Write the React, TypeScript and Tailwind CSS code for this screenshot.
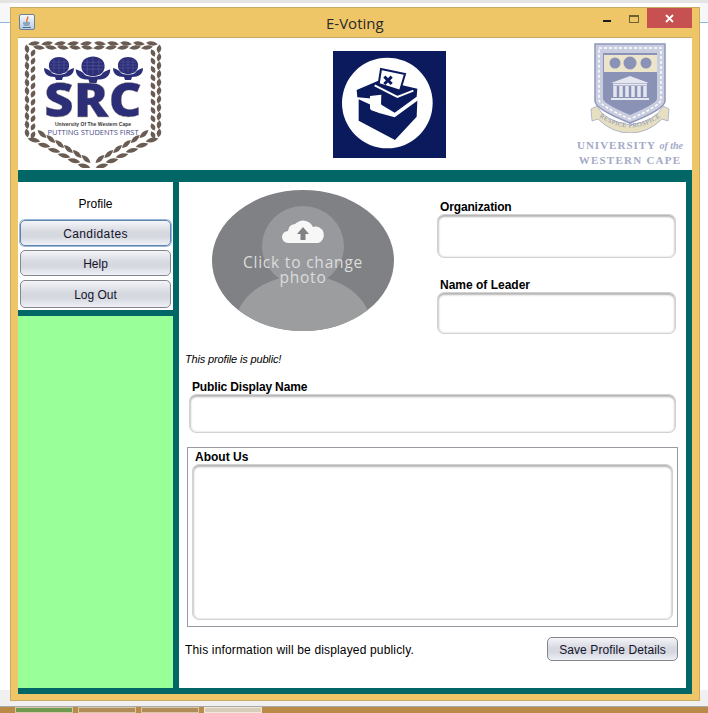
import React from 'react';

// leaves of the SRC wreath: x, y, rotation, length
const half: [number, number, number, number][] = [];
for (let i = 0; i < 5; i++) {
  half.push([10 + i * 13, 3.5, 82, 12]);
  half.push([15 + i * 12, 7.5, 98, 12]);
}
for (let i = 0; i < 11; i++) {
  half.push([3, 9 + i * 8.4, -8, 9]);
  half.push([9, 13 + i * 8.2, 24, 8]);
}
for (let i = 0; i < 6; i++) {
  const t = i / 5;
  half.push([10 + t * 50, 100 + t * 26, 104, 13]);
  half.push([18 + t * 44, 94 + t * 25, 132, 12]);
}
const wreathLeaves = [...half, ...half.map(([x, y, a, l]) => [138 - x, y, -a, l] as [number, number, number, number])];

function Flower({ x, y, s = 1 }: { x: number; y: number; s?: number }) {
  return (
    <g transform={`translate(${x} ${y}) scale(${s})`}>
      <path d="M-10 0 C-11 -7 -5 -10 0 -10 C5 -10 11 -7 10 0 C9 5 5 7 0 7 C-5 7 -9 5 -10 0Z" fill="#2c2f78" />
      <path d="M-8 -5 H8 M-9.500 -2 H9.500 M-9 1 H9 M-5 -8 V5 M0 -9 V6 M5 -8 V5" stroke="#5a5da0" strokeWidth="0.500" />
      <path d="M-15 1 C-15 7 -11 10 -4 10 L-3 13 L3 13 L4 10 C11 10 15 7 15 1 C12 2 9 3 7 6 C4 8 -4 8 -7 6 C-9 3 -12 2 -15 1Z" fill="#2c2f78" />
    </g>
  );
}

function SrcLogo() {
  return (
    <svg width="138" height="128" viewBox="0 0 138 128" className="shrink-0">
      {wreathLeaves.map(([x, y, a, l], i) => (
        <path key={i} d={`M0 ${-l / 2} Q4.500 0 0 ${l / 2} Q-4.500 0 0 ${-l / 2}Z`} fill="#6a5c52" transform={`translate(${x} ${y}) rotate(${a})`} />
      ))}
      <Flower x={35} y={27} />
      <Flower x={69} y={28} s={1.15} />
      <Flower x={104} y={27} />
      <text x="69" y="77" textAnchor="middle" fontFamily="'Open Sans', sans-serif" fontWeight="800" fontSize="47" textLength="98" lengthAdjust="spacingAndGlyphs" fill="#2c2f78" stroke="#b8a98a" strokeWidth="0.300">SRC</text>
      <text x="69" y="86" textAnchor="middle" fontFamily="'Liberation Sans', sans-serif" fontWeight="700" fontSize="5" fill="#3a3636">University Of The Western Cape</text>
      <text x="69" y="95" textAnchor="middle" fontFamily="'Open Sans', sans-serif" fontSize="7.200" textLength="91" lengthAdjust="spacingAndGlyphs" fill="#4a4d8c">PUTTING STUDENTS FIRST</text>
    </svg>
  );
}

function BallotLogo() {
  return (
    <svg width="113" height="107" viewBox="99 153 339 321" className="shrink-0">
      <rect x="99" y="153" width="339" height="321" fill="#0a1a5c" />
      <circle cx="262" cy="309" r="136" fill="#fff" />
      <path d="M170 270 L240 240 L352 266 L350 290 L284 338 L244 314 L240 298 L172 292Z" fill="#0a1a5c" />
      <path d="M243 207 L315 222 L300 272 L236 252Z" fill="#fff" stroke="#0a1a5c" strokeWidth="6" />
      <path d="M253 230 L275 252 M275 230 L253 252" stroke="#0a1a5c" strokeWidth="9" />
      <path d="M224 256 L292 291 L340 272" stroke="#fff" strokeWidth="6" fill="none" />
      <path d="M176 298 L212 314 L212 330 L240 340 L284 352 L352 302 L350 350 L285 420 L176 362Z" fill="#0a1a5c" />
      <path d="M210 288 L244 284 L242 340 L210 326Z" fill="#fff" />
    </svg>
  );
}

function UwcLogo() {
  return (
    <div className="ml-[132px] mt-[5px] flex w-[104px] shrink-0 flex-col items-center">
      <svg width="80" height="90" viewBox="0 0 80 90">
        <path d="M5 1 H75 V58 Q75 66 40 80 Q5 66 5 58Z" fill="#c9cde0" stroke="#8f97ba" strokeWidth="1.500" />
        <path d="M9 5 H71 V57 Q70 63 40 76 Q10 63 9 57Z" fill="none" stroke="#fff" strokeWidth="1.500" strokeDasharray="3 2" />
        <path d="M13 10 H67 V56 Q66 61 40 72 Q14 61 13 56Z" fill="#8a92b5" />
        <rect x="14" y="12" width="53" height="17" fill="#ece5cc" />
        <circle cx="25" cy="20" r="5.500" fill="#8a92b5" />
        <circle cx="40" cy="20" r="6.500" fill="#8a92b5" />
        <circle cx="56" cy="20" r="5.500" fill="#8a92b5" />
        <path d="M21 40 L40 33 L59 40Z" fill="#e4e6f0" />
        <path d="M23 41.500 H57" stroke="#e4e6f0" strokeWidth="2" />
        <path d="M25 43 V54 M31 43 V54 M37 43 V54 M43 43 V54 M49 43 V54 M55 43 V54" stroke="#e4e6f0" strokeWidth="3.500" />
        <path d="M21 56 H59" stroke="#e4e6f0" strokeWidth="2" />
        <path d="M1 66 L7 63 Q14 78 40 82 Q66 78 73 63 L79 66 L78 78 L72 76 Q58 90 40 90 Q22 90 8 76 L2 78Z" fill="#e6dfc0" stroke="#a3a9c6" strokeWidth="0.800" />
        <path id="motto-curve" d="M8 73 Q40 96 72 73" fill="none" />
        <text fontFamily="'Liberation Serif', serif" fontSize="6.500" letterSpacing="0.500" fill="#8a92b5">
          <textPath href="#motto-curve" startOffset="50%" textAnchor="middle">RESPICE PROSPICE</textPath>
        </text>
      </svg>
      <div className="mt-[5px] whitespace-nowrap font-['Liberation_Serif',serif] text-[11px] font-bold leading-[14px] tracking-[1px] text-[#a3a9c6]">
        UNIVERSITY <span className="text-[10px] italic tracking-normal">of the</span>
      </div>
      <div className="whitespace-nowrap font-['Liberation_Serif',serif] text-[11px] font-bold leading-[15px] tracking-[1.25px] text-[#a3a9c6]">
        WESTERN CAPE
      </div>
    </div>
  );
}

function PhotoPicker() {
  return (
    <svg width="182" height="141" viewBox="0 0 182 141" className="shrink-0">
      <defs>
        <clipPath id="photo-clip">
          <ellipse cx="91" cy="70.500" rx="91" ry="70.500" />
        </clipPath>
      </defs>
      <g clipPath="url(#photo-clip)">
        <rect width="182" height="141" fill="#7f8184" />
        <ellipse cx="91" cy="56" rx="41" ry="40" fill="#97999c" />
        <ellipse cx="91" cy="136" rx="68" ry="51" fill="#9b9d9f" />
        <path d="M76 53 a6 6 0 0 1 0 -12 a8 8 0 0 1 7 -7 a11 11 0 0 1 18 3 a8 8 0 0 1 5 16Z" fill="#f7f7f7" />
        <path d="M91 37 L97 44 H93.500 V50 H88.500 V44 H85Z" fill="#808285" />
        <text x="91" y="77.500" textAnchor="middle" fontFamily="'Open Sans', sans-serif" fontSize="15.500" letterSpacing="0.800" fill="#dcdcdc">Click to change</text>
        <text x="91" y="93" textAnchor="middle" fontFamily="'Open Sans', sans-serif" fontSize="15.500" letterSpacing="0.800" fill="#dcdcdc">photo</text>
      </g>
    </svg>
  );
}

function JavaButton({ label, focused, h, spaced }: { label: string; focused?: boolean; h: string; spaced?: boolean }) {
  return (
    <button
      className={`${h} w-[151px] rounded-[5px] border bg-[linear-gradient(#f4f5f8,#d7d9e1_45%,#d6d8e0_65%,#eff1f7)] pt-[1px] text-[12px] text-[#14142c] ${
        spaced ? 'tracking-[0.4px]' : ''
      } ${focused ? 'border-[#5f85ad] shadow-[0_0_0_1px_#9ab8d8]' : 'border-[#85858c]'}`}
    >
      {label}
    </button>
  );
}

function Field({ w, h }: { w: string; h: string }) {
  return <div className={`${w} ${h} rounded-[7px] border border-[#d2d2d2] bg-white shadow-[inset_0_2px_2px_#b5b5b5,inset_1px_0_2px_#d8d8d8,inset_-1px_0_2px_#e6e6e6]`} />;
}

export default function App() {
  return (
    <div className="flex h-[713px] w-[708px] flex-col overflow-hidden bg-white font-['Liberation_Sans',Arial,sans-serif] text-black">
      <div className="h-[3px] shrink-0 bg-[#e4e4e4]" />
      <div className="flex h-[698px] shrink-0">
        <div className="flex w-[10px] shrink-0 flex-col">
          <div className="h-[20px] border-b border-[#8db8e4] bg-[#f6f7f9]" />
          <div className="flex-1 bg-white" />
          <div className="h-[11px] bg-[#f0f0f0]" />
        </div>

        {/* window */}
        <div className="mt-[4px] flex h-[694px] w-[690px] shrink-0 flex-col border border-[#c9aa62] bg-[#efc667] px-[7px] pb-[6px]">
          <div className="flex h-[29px] shrink-0 items-start">
            <div className="ml-[1px] mt-[6px] flex h-[16px] w-[16px] items-center justify-center rounded-[2px] border border-[#6f7f94] bg-[linear-gradient(#f4f8fc,#b9cde2)]">
              <svg width="12" height="13" viewBox="0 0 12 13">
                <path d="M6.500 0.500 C8 2.500 4.500 3.500 6 6" stroke="#e8651a" strokeWidth="1.400" fill="none" />
                <path d="M2 7 H9 M2.500 9 H8.500 M1.500 11.500 H10" stroke="#4f6f92" strokeWidth="1.100" />
              </svg>
            </div>
            <div className="ml-[291px] mt-[5px] font-['Open_Sans',sans-serif] text-[15px] leading-[20px] text-[#2a2a2a]">E-Voting</div>
            <div className="ml-auto flex items-start">
              <div className="mt-[12px] h-[2px] w-[8px] bg-[#1c1c1c]" />
              <div className="ml-[18px] mt-[7px] h-[8px] w-[10px] border border-t-2 border-[#6b6038]" />
              <div className="ml-[8px] flex h-[20px] w-[45px] items-center justify-center bg-[#c75050]">
                <svg width="9" height="9" viewBox="0 0 9 9">
                  <path d="M1 1 L8 8 M8 1 L1 8" stroke="#fff" strokeWidth="1.800" />
                </svg>
              </div>
            </div>
          </div>

          {/* content frame */}
          <div className="flex min-h-0 flex-1 flex-col border-t border-[#c9aa62] bg-[#006666]">
            <div className="flex h-[132px] shrink-0 items-start bg-white">
              <div className="ml-[6px] mt-[2px]">
                <SrcLogo />
              </div>
              <div className="ml-[171px] mt-[13px]">
                <BallotLogo />
              </div>
              <UwcLogo />
            </div>

            <div className="mb-[6px] mt-[12px] flex min-h-0 flex-1">
              {/* sidebar */}
              <div className="flex w-[155px] shrink-0 flex-col">
                <div className="flex h-[128px] shrink-0 flex-col items-center bg-white">
                  <div className="mt-[15px] h-[23px] text-[12px] leading-[15px]">Profile</div>
                  <JavaButton label="Candidates" focused spaced h="h-[26px]" />
                  <div className="mt-[4px]">
                    <JavaButton label="Help" h="h-[26px]" />
                  </div>
                  <div className="mt-[4px]">
                    <JavaButton label="Log Out" h="h-[28px]" />
                  </div>
                </div>
                <div className="mt-[6px] flex-1 bg-[#99ff99]" />
              </div>

              {/* profile form */}
              <div className="ml-[6px] mr-[6px] flex w-[507px] shrink-0 flex-col bg-white">
                <div className="flex h-[152px] shrink-0 items-start">
                  <div className="ml-[33px] mt-[8px]">
                    <PhotoPicker />
                  </div>
                  <div className="ml-[43px] mt-[18px] flex flex-col">
                    <div className="ml-[3px] h-[14px] text-[12px] font-bold leading-[14px] tracking-[-0.15px]">Organization</div>
                    <Field w="w-[239px]" h="h-[44px]" />
                    <div className="ml-[3px] mt-[20px] h-[14px] text-[12px] font-bold leading-[14px]">Name of Leader</div>
                    <Field w="w-[239px]" h="h-[42px]" />
                  </div>
                </div>

                <div className="ml-[6px] mt-[18px] h-[14px] text-[11px] italic leading-[14px] tracking-[-0.15px]">This profile is public!</div>
                <div className="ml-[13px] mt-[14px] h-[14px] text-[12px] font-bold leading-[14px] tracking-[-0.15px]">Public Display Name</div>
                <div className="ml-[10px]">
                  <Field w="w-[487px]" h="h-[39px]" />
                </div>

                <div className="ml-[8px] mt-[14px] h-[180px] w-[491px] shrink-0 border border-[#9a9aa2]">
                  <div className="ml-[7px] h-[16px] pt-[1px] text-[12px] font-bold leading-[16px]">About Us</div>
                  <div className="ml-[4px]">
                    <Field w="w-[481px]" h="h-[156px]" />
                  </div>
                </div>

                <div className="ml-[6px] mr-[8px] mt-[10px] flex items-center justify-between">
                  <div className="pt-[2px] text-[12px] tracking-[0.16px]">This information will be displayed publicly.</div>
                  <button className="h-[24px] w-[131px] rounded-[5px] border border-[#85858c] bg-[linear-gradient(#f4f5f8,#d7d9e1_45%,#d6d8e0_65%,#eff1f7)] pt-[1px] text-[12px] tracking-[0.1px] text-[#14142c]">
                    Save Profile Details
                  </button>
                </div>
              </div>
            </div>
          </div>
        </div>

        <div className="flex w-[8px] shrink-0 flex-col">
          <div className="h-[20px] border-b border-[#8db8e4] bg-[#f6f7f9]" />
          <div className="flex-1 bg-white" />
          <div className="h-[11px] bg-[#f0f0f0]" />
        </div>
      </div>

      {/* desktop strip */}
      <div className="h-[6px] shrink-0 border-b border-[#a9a9a9] bg-[#f0f0f0]" />
      <div className="flex h-[6px] flex-1 items-start gap-[5px] bg-[#b98a48] pl-[15px]">
        <div className="h-[6px] w-[58px] border border-[#d9c8a8] bg-[#6f9a50]" />
        <div className="h-[6px] w-[58px] border border-[#d9c8a8] bg-[#b08c58]" />
        <div className="h-[6px] w-[58px] border border-[#d9c8a8] bg-[#b08c58]" />
        <div className="h-[6px] w-[58px] border border-[#f0e8d8] bg-[#d8cdb8]" />
      </div>
    </div>
  );
}
